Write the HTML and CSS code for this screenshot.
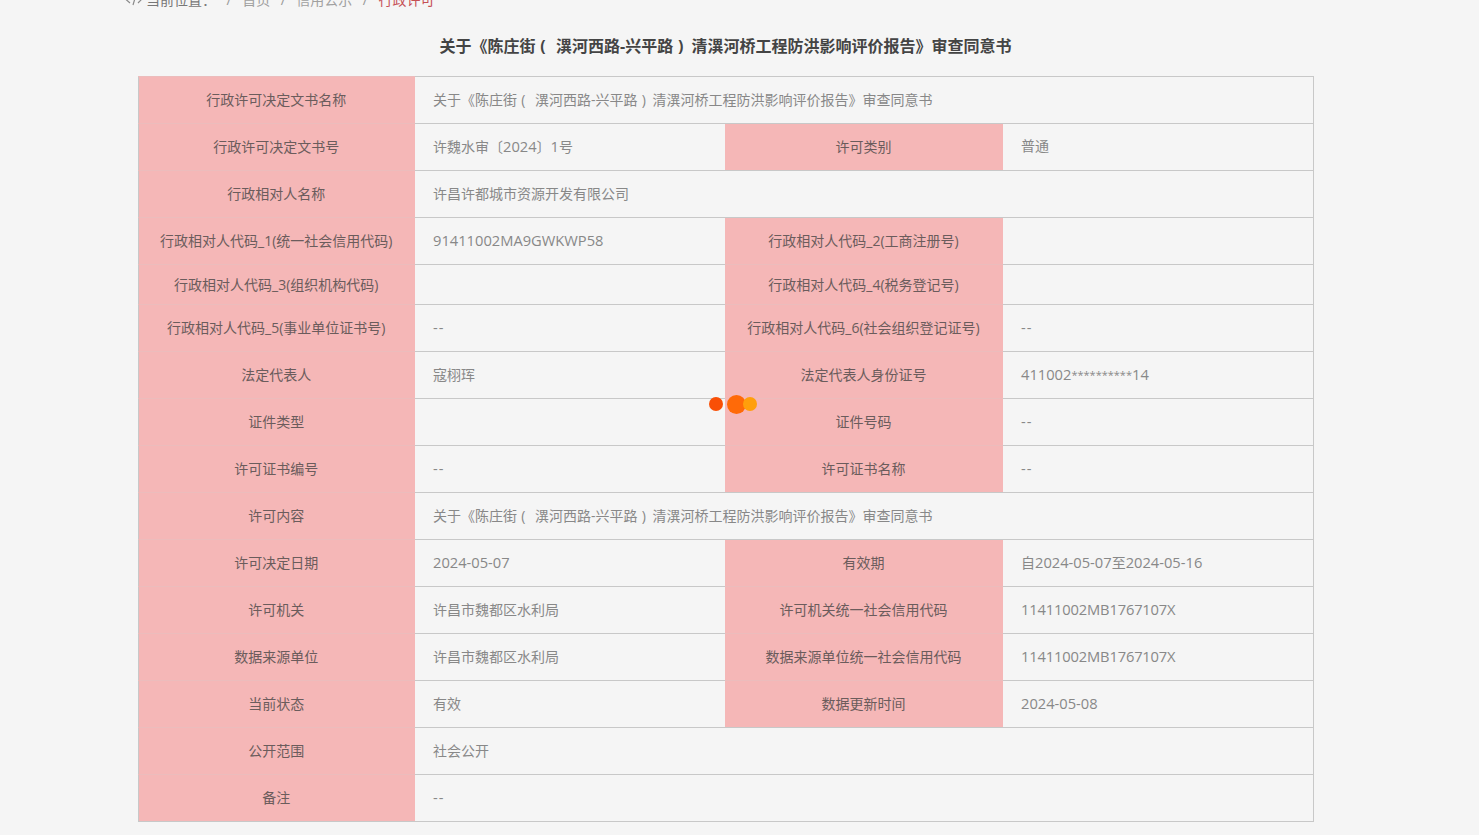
FILE: index.html
```html
<!DOCTYPE html>
<html lang="zh-CN">
<head>
<meta charset="utf-8">
<title>行政许可</title>
<link rel="stylesheet" href="styles.css">
</head>
<body>
<div class="page">
  <nav class="crumbs">
    <svg class="crumb-icon" width="21" height="14" viewBox="0 0 21 14"><path d="M5 3 1 6.5 5 10M8 12 11 2M13 3c3 0 4 2 3 4l-3 3" fill="none" stroke="#8a8a8a" stroke-width="1.2"/></svg>
    <span class="crumb-label">当前位置：</span>
    <span class="sep">/</span><span>首页</span>
    <span class="sep">/</span><span>信用公示</span>
    <span class="sep">/</span><span class="current">行政许可</span>
  </nav>
  <h1 class="title">关于《陈庄街<span class="par-open">(</span>潩河西路-兴平路<span class="par-close">)</span>清潩河桥工程防洪影响评价报告》审查同意书</h1>
  <table class="detail">
    <colgroup><col class="c1"><col class="c2"><col class="c3"><col class="c4"></colgroup>
    <tbody>
      <tr><th>行政许可决定文书名称</th><td colspan="3">关于《陈庄街<span class="par-open">(</span>潩河西路-兴平路<span class="par-close">)</span>清潩河桥工程防洪影响评价报告》审查同意书</td></tr>
      <tr><th>行政许可决定文书号</th><td class="raised">许魏水审〔<span class="en">2024</span>〕<span class="en">1</span>号</td><th>许可类别</th><td class="raised">普通</td></tr>
      <tr><th>行政相对人名称</th><td colspan="3">许昌许都城市资源开发有限公司</td></tr>
      <tr><th>行政相对人代码_1(统一社会信用代码)</th><td class="raised"><span class="en">91411002MA9GWKWP58</span></td><th>行政相对人代码_2(工商注册号)</th><td></td></tr>
      <tr class="short"><th>行政相对人代码_3(组织机构代码)</th><td></td><th>行政相对人代码_4(税务登记号)</th><td></td></tr>
      <tr><th>行政相对人代码_5(事业单位证书号)</th><td class="raised"><span class="dash">--</span></td><th>行政相对人代码_6(社会组织登记证号)</th><td class="raised"><span class="dash">--</span></td></tr>
      <tr><th>法定代表人</th><td>寇栩珲</td><th>法定代表人身份证号</th><td class="raised"><span class="en">411002<span class="ast">**********</span>14</span></td></tr>
      <tr><th>证件类型</th><td></td><th>证件号码</th><td class="raised"><span class="dash">--</span></td></tr>
      <tr><th>许可证书编号</th><td class="raised"><span class="dash">--</span></td><th>许可证书名称</th><td class="raised"><span class="dash">--</span></td></tr>
      <tr><th>许可内容</th><td colspan="3">关于《陈庄街<span class="par-open">(</span>潩河西路-兴平路<span class="par-close">)</span>清潩河桥工程防洪影响评价报告》审查同意书</td></tr>
      <tr><th>许可决定日期</th><td class="raised"><span class="en">2024-05-07</span></td><th>有效期</th><td class="raised">自<span class="en">2024-05-07</span>至<span class="en">2024-05-16</span></td></tr>
      <tr><th>许可机关</th><td>许昌市魏都区水利局</td><th>许可机关统一社会信用代码</th><td class="raised"><span class="en code">11411002MB1767107X</span></td></tr>
      <tr><th>数据来源单位</th><td>许昌市魏都区水利局</td><th>数据来源单位统一社会信用代码</th><td class="raised"><span class="en code">11411002MB1767107X</span></td></tr>
      <tr><th>当前状态</th><td>有效</td><th>数据更新时间</th><td class="raised"><span class="en">2024-05-08</span></td></tr>
      <tr><th>公开范围</th><td colspan="3">社会公开</td></tr>
      <tr><th>备注</th><td class="raised" colspan="3"><span class="dash">--</span></td></tr>
    </tbody>
  </table>
</div>
<div class="loader"><i class="dot d1"></i><i class="dot d2"></i><i class="dot d3"></i></div>
</body>
</html>
```
FILE: styles.css
```css
html, body { margin: 0; padding: 0; height: 835px; overflow: hidden; background: #f5f5f5; }
body { font-family: "Open Sans", "Noto Sans CJK SC", sans-serif; color: #888; font-size: 14px; }
.page { margin-top: -11px; padding-left: 125px; }
.crumbs { display: flex; align-items: center; height: 22px; line-height: 22px; font-size: 14px; color: #a0a0a0; }
.crumb-label { color: #777; }
.sep { margin: 0 10.5px; color: #999; }
.current { color: #c55055; }
.title { margin: 12px 0 0 -125px; width: 1451px; height: 46px; line-height: 46px; text-align: center; font-size: 16px; font-weight: 700; color: #444; white-space: nowrap; }
.par-open, .par-close { display: inline-block; text-align: left; padding-left: 0.3em; box-sizing: border-box; }
.par-open { width: 1.29em; }
.par-close { width: 1.15em; }
.detail { margin: 7px 0 0 13px; width: 1175px; table-layout: fixed; border-collapse: collapse; border: 1px solid #c8c8c8; }
.c1 { width: 276px; } .c2 { width: 310px; } .c3 { width: 278px; } .c4 { width: 311px; }
.detail tr { height: 47px; }
.detail tr.short { height: 40px; }
.detail th, .detail td { padding: 0; font-size: 14px; box-sizing: border-box; line-height: 20px; }
.detail th { background: #f5b7b7; color: #6b5c5c; font-weight: 400; text-align: center; white-space: nowrap; border: 0; border-top: 1px solid #ecbcbc; }
.detail th:first-child { padding-right: 1px; }
.detail td { padding-left: 18.5px; color: #888; border-top: 1px solid #c8c8c8; border-bottom: 1px solid #c8c8c8; white-space: nowrap; }
.detail td.raised { padding-bottom: 2px; }
.detail td .par-close { width: 15px; }
.en { font-size: 14.7px; }
.code { letter-spacing: -0.15px; }
.ast { font-size: 11px; vertical-align: 1px; }
.dash { font-size: 14.7px; letter-spacing: 1px; }
.loader { position: absolute; left: 0; top: 0; }
.dot { position: absolute; border-radius: 50%; }
.d1 { left: 709px; top: 397px; width: 14px; height: 14px; background: #f94f06; }
.d2 { left: 727px; top: 395px; width: 19px; height: 19px; background: #ff6a08; }
.d3 { left: 743px; top: 397px; width: 14px; height: 14px; background: #ff9f0b; }
```
